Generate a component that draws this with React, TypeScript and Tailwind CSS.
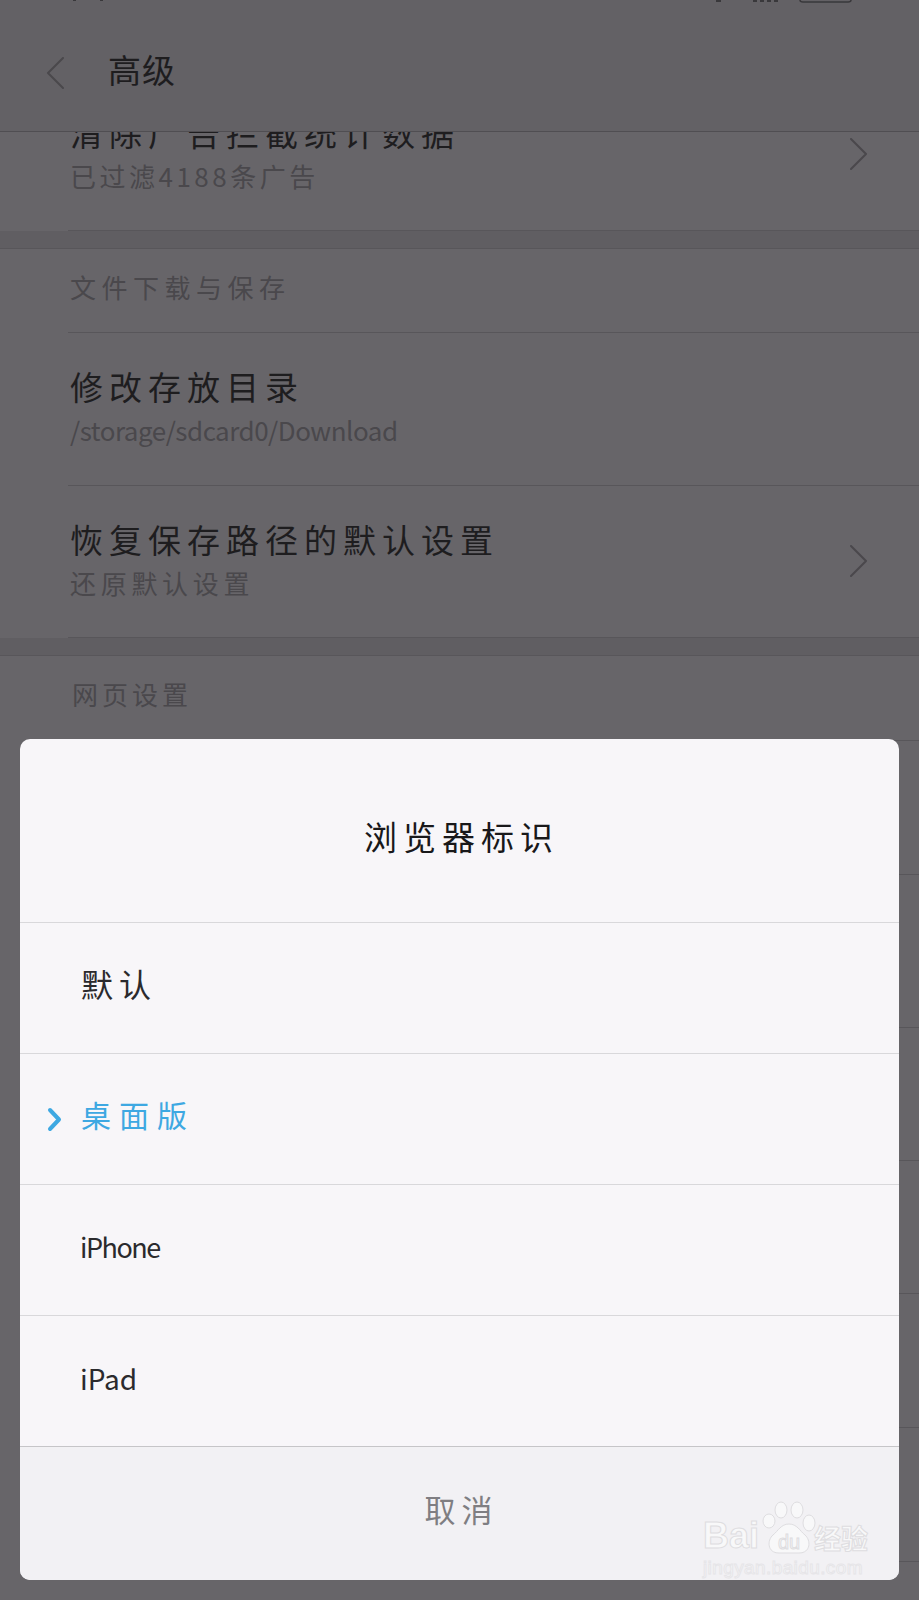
/**
 * Browser "advanced" settings page, dimmed, with the user agent picker dialog on top.
 */

const FONT = "font-['Noto_Sans_CJK_SC','Noto_Sans',sans-serif]"

const OPTIONS = [
  { label: '默认', cls: 'pb-[10px] text-[32px] tracking-[6px] text-[#2b2a2d] pl-[1px]' },
  { label: '桌面版', cls: 'pb-[10px] text-[30px] tracking-[8px] text-[#3ea8e2] pl-[1px]', active: true },
  { label: 'iPhone', cls: 'pb-[6px] text-[27px] tracking-[-1.5px] text-[#2b2a2d]' },
  { label: 'iPad', cls: 'pb-[6px] text-[28px] text-[#2b2a2d]' },
]

function Chevron({ className, points, box = '0 0 18 32', weight = 2 }: {
  className: string
  points: string
  box?: string
  weight?: number
}) {
  return (
    <svg viewBox={box} className={className} fill="none" stroke="currentColor" strokeWidth={weight} strokeLinecap="round" strokeLinejoin="round">
      <polyline points={points} />
    </svg>
  )
}

function SettingRow({ title, sub, height, arrow, className = '', subClass = 'tracking-[3.5px]' }: {
  title?: string
  sub?: string
  height: string
  arrow?: boolean
  className?: string
  subClass?: string
}) {
  return (
    <div className={`${height} ${className} ml-[68px] pl-[2px] pr-[51px] pb-[2px] border-b border-[#58565a] flex items-center justify-between`}>
      <div>
        {title && <div className="text-[33px] leading-[44px] tracking-[6px] text-[#1e1d1f] whitespace-nowrap">{title}</div>}
        {sub && <div className={`text-[26px] leading-[44px] text-[#4a484c] whitespace-nowrap ${subClass}`}>{sub}</div>}
      </div>
      {arrow && <Chevron className="w-[18px] h-[32px] text-[#4a484c]" points="1,1 16,16 1,31" />}
    </div>
  )
}

function SectionLabel({ label, height, className }: { label: string; height: string; className: string }) {
  return (
    <div className={`${height} ${className} ml-[68px] pt-[18px] border-b border-[#58565a] text-[26px] leading-[40px] text-[#4a484c]`}>
      {label}
    </div>
  )
}

function Band() {
  return <div className="h-[18px] bg-[#605e62] border-b border-[#58565a]" />
}

function Watermark() {
  const big = '[-webkit-text-stroke:1px_#dedde0] text-[#f8f8f9]'
  const small = '[-webkit-text-stroke:1px_#e6e5e8] text-[#f8f8f9]'
  return (
    <div className="absolute right-[31px] bottom-[1px] w-[165px] flex flex-col font-['Liberation_Sans',sans-serif]">
      <div className="flex items-end h-[54px]">
        <span className={`text-[36px] leading-[38px] font-bold ${big}`}>Bai</span>
        <div className="relative w-[60px] h-[54px] shrink-0 -mr-[5px]">
          <svg viewBox="0 0 60 54" className="w-[60px] h-[54px]" fill="#f8f8f9" stroke="#dedde0">
            <ellipse cx="10" cy="20" rx="6" ry="7" />
            <ellipse cx="22" cy="9" rx="6" ry="8" />
            <ellipse cx="38" cy="9" rx="6" ry="8" />
            <ellipse cx="50" cy="22" rx="6" ry="8" />
            <path d="M30 23c8 0 11 7 16 11 6 5 6 18-6 18H20C8 52 8 39 14 34c5-4 8-11 16-11z" />
          </svg>
          <span className={`absolute inset-x-0 bottom-[2px] text-center text-[20px] leading-[22px] ${big}`}>du</span>
        </div>
        <span className={`text-[27px] leading-[34px] font-bold whitespace-nowrap font-['Noto_Sans_CJK_SC',sans-serif] ${big}`}>经验</span>
      </div>
      <span className={`mt-[2px] text-[19px] leading-[22px] tracking-[0.4px] whitespace-nowrap ${small}`}>jingyan.baidu.com</span>
    </div>
  )
}

function Dialog() {
  return (
    <div className="absolute left-[20px] top-[739px] w-[879px] h-[841px] rounded-[10px] overflow-hidden bg-[#f8f6f9] flex flex-col">
      <div className="h-[184px] pt-[12px] pl-[4px] border-b border-[#d9d8db] flex items-center justify-center text-[33px] tracking-[6px] text-[#19181a]">
        浏览器标识
      </div>
      {OPTIONS.map(option => (
        <div
          key={option.label}
          className={`h-[131px] flex items-center border-b ${option.label === 'iPad' ? 'border-[#c6c5c8]' : 'border-[#d9d8db]'}`}
        >
          <div className="w-[60px] shrink-0 pl-[27px]">
            {option.active && (
              <Chevron
                className="w-[15px] h-[25px] text-[#3ea8e2]"
                box="0 0 15 25"
                weight={4}
                points="3,3 12,12.5 3,22"
              />
            )}
          </div>
          <span className={option.cls}>{option.label}</span>
        </div>
      ))}
      <div className="flex-1 pb-[8px] pl-[4px] bg-[#f2f1f4] flex items-center justify-center text-[31px] tracking-[6px] text-[#7f7e82]">
        取消
      </div>
      <Watermark />
    </div>
  )
}

export default function App() {
  return (
    <div className={`relative w-[919px] h-[1600px] overflow-hidden bg-[#676569] ${FONT}`}>
      <header className="h-[132px] bg-[#636165] border-b border-[#504e52]">
        {/* what is left of the status bar at the top edge */}
        <svg viewBox="0 0 919 3" className="block w-[919px] h-[3px]" fill="#39383b">
          <rect x="73" y="0" width="3" height="1" />
          <rect x="100" y="0" width="3" height="1" />
          <rect x="716" y="0" width="5" height="2" />
          <rect x="753" y="0" width="4" height="2" />
          <rect x="760" y="0" width="4" height="2" />
          <rect x="767" y="0" width="4" height="2" />
          <rect x="774" y="0" width="4" height="2" />
          <path d="M800 0c0 1.500 1 2 3 2h45c2 0 3-.5 3-2" fill="none" stroke="#39383b" strokeWidth="1.500" />
        </svg>
        <div className="h-[128px] pt-[6px] flex items-center">
          <Chevron className="ml-[46px] mt-[6px] w-[18px] h-[32px] text-[#4a484c]" points="17,1 2,16 17,31" />
          <span className="ml-[44px] text-[33px] tracking-[1px] text-[#1e1d1f]">高级</span>
        </div>
      </header>

      <main className="h-[1468px] overflow-hidden">
        <SettingRow
          className="-mt-[52px]"
          height="h-[151px]"
          title="清除广告拦截统计数据"
          sub="已过滤4188条广告"
          arrow
        />
        <Band />
        <SectionLabel label="文件下载与保存" height="h-[84px]" className="pl-[2px] tracking-[5.500px]" />
        <SettingRow height="h-[153px]" title="修改存放目录" sub="/storage/sdcard0/Download" subClass="tracking-[-0.5px]" />
        <SettingRow height="h-[152px]" title="恢复保存路径的默认设置" sub="还原默认设置" subClass="tracking-[4.700px]" arrow />
        <Band />
        <SectionLabel label="网页设置" height="h-[85px]" className="pl-[4px] tracking-[4px]" />
        <SettingRow height="h-[134px]" />
        <SettingRow height="h-[153px]" />
        <SettingRow height="h-[133px]" />
        <SettingRow height="h-[133px]" />
        <SettingRow height="h-[134px]" />
        <SettingRow height="h-[134px]" />
        <SettingRow height="h-[134px]" />
      </main>

      <Dialog />
    </div>
  )
}
